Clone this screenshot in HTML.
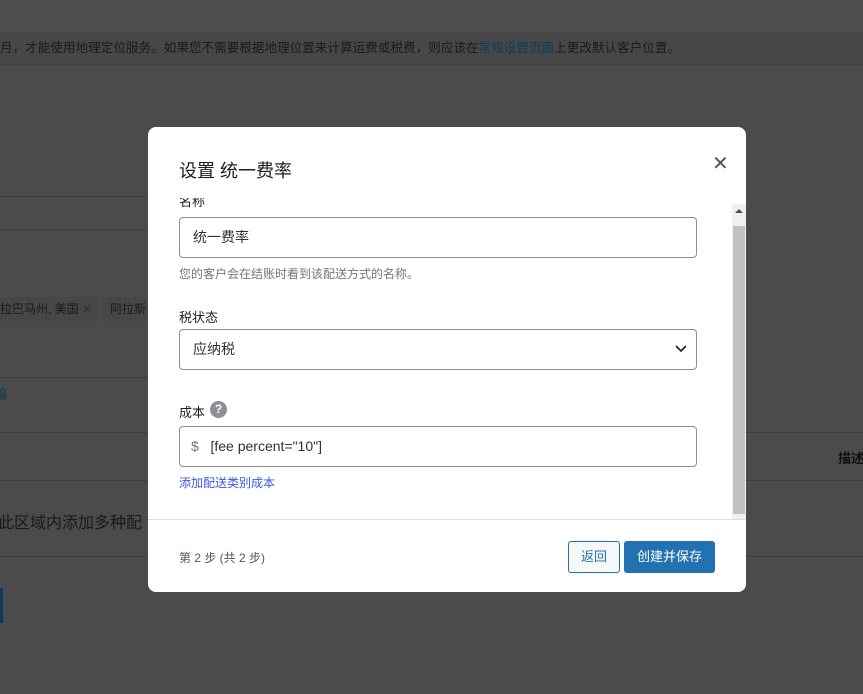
<!DOCTYPE html>
<html><head><meta charset="utf-8"><style>
*{box-sizing:border-box;margin:0;padding:0}
body{width:863px;height:694px;overflow:hidden;background:#4b4b4b;font-family:"Liberation Sans","Noto Sans CJK SC",sans-serif;position:relative;color:#1e1e1e}
.a{position:absolute}
.hl{position:absolute;height:1px;background:#3e3e3e}
.m{left:148px;top:127px;width:598px;height:465px;background:#fff;border-radius:8px;overflow:hidden}
.inp{position:absolute;left:31px;width:518px;height:41px;border:1px solid #8c8f94;border-radius:4px;font-size:14px;padding-left:13px;line-height:39px;color:#2c3338}
.lbl{position:absolute;left:31px;font-size:13px;color:#1e1e1e}
</style></head><body>
<div class="a" style="left:0;top:0;width:863px;height:32px;background:#4e4e4e"></div>
<div class="a" style="left:0;top:32px;width:863px;height:33px;background:#474747;border-bottom:1px solid #3d3d3d"></div>
<div class="a" style="left:0;top:37px;font-size:12.6px;color:#1a1a1a;white-space:nowrap">月，才能使用地理定位服务。如果您不需要根据地理位置来计算运费或税费，则应该在<span style="color:#0d3c5c">常规设置页面</span>上更改默认客户位置。</div>
<div class="hl" style="left:0;top:196px;width:148px"></div>
<div class="hl" style="left:0;top:229px;width:148px"></div>
<div class="a" style="left:0;top:297px;width:97px;height:24px;background:#474747"></div>
<div class="a" style="left:0;top:300px;font-size:12px;color:#1a1a1a;white-space:nowrap">拉巴马州, 美国 <span style="color:#333">✕</span></div>
<div class="a" style="left:102px;top:297px;width:46px;height:24px;background:#474747"></div>
<div class="a" style="left:110px;top:300px;font-size:12px;color:#1a1a1a;white-space:nowrap">阿拉斯</div>
<div class="hl" style="left:0;top:377px;width:148px"></div>
<div class="a" style="left:-6px;top:384px;font-size:13px;color:#0d3c5c">编</div>
<div class="hl" style="left:0;top:432px;width:148px"></div>
<div class="hl" style="left:746px;top:432px;width:117px"></div>
<div class="a" style="left:838px;top:448px;font-size:13px;font-weight:bold;color:#111;white-space:nowrap">描述</div>
<div class="hl" style="left:0;top:480px;width:148px"></div>
<div class="hl" style="left:746px;top:480px;width:117px"></div>
<div class="a" style="left:-2px;top:509px;font-size:16px;color:#1a1a1a;white-space:nowrap">此区域内添加多种配</div>
<div class="hl" style="left:0;top:556px;width:148px"></div>
<div class="hl" style="left:746px;top:556px;width:117px"></div>
<div class="a" style="left:0;top:588px;width:3px;height:35px;background:#0b3a5a"></div>

<div class="a m">
<div class="a" style="left:31px;top:30px;font-size:18px;color:#1e1e1e">设置 统一费率</div>
<div class="a" style="left:564px;top:24px;font-size:20px;color:#50575e">✕</div>
<div class="a" style="left:0;top:71px;width:598px;height:322px;overflow:hidden">
 <div class="lbl" style="top:-7px">名称</div>
 <div class="inp" style="top:19px">统一费率</div>
 <div class="a" style="left:31px;top:67px;font-size:12px;color:#757575">您的客户会在结账时看到该配送方式的名称。</div>
 <div class="lbl" style="top:109px">税状态</div>
 <div class="inp" style="top:131px">应纳税<svg class="a" style="right:8px;top:14px" width="14" height="10" viewBox="0 0 14 10"><path d="M2 2l5 5 5-5" fill="none" stroke="#1e1e1e" stroke-width="1.6"/></svg></div>
 <div class="lbl" style="top:204px">成本</div>
 <div class="a" style="left:62px;top:203px;width:17px;height:17px;border-radius:50%;background:#8c8f94;color:#fff;font-size:12px;font-weight:bold;text-align:center;line-height:17px">?</div>
 <div class="inp" style="top:228px;padding-left:11px"><span style="color:#757575">$</span>&nbsp;&nbsp;&nbsp;[fee percent="10"]</div>
 <div class="a" style="left:31px;top:276px;font-size:12px;color:#3858e9">添加配送类别成本</div>
 <div class="a" style="left:584px;top:6px;width:14px;height:316px;background:#f0f0f0"></div>
 <div class="a" style="left:585px;top:28px;width:12px;height:288px;background:#c1c1c1"></div>
 <svg class="a" style="left:587px;top:10px" width="8" height="6"><path d="M0 5L4 1 8 5z" fill="#505050"/></svg>
</div>
<div class="a" style="left:0;top:392px;width:598px;height:1px;background:#ddd"></div>
<div class="a" style="left:31px;top:422px;font-size:12px;color:#50575e">第 2 步 (共 2 步)</div>
<div class="a" style="left:420px;top:414px;width:52px;height:32px;border:1px solid #2271b1;border-radius:3px;background:#f6f7f7;color:#2271b1;font-size:13px;text-align:center;line-height:30px">返回</div>
<div class="a" style="left:476px;top:414px;width:91px;height:32px;border-radius:3px;background:#2271b1;color:#fff;font-size:13px;text-align:center;line-height:32px">创建并保存</div>
</div>
</body></html>
